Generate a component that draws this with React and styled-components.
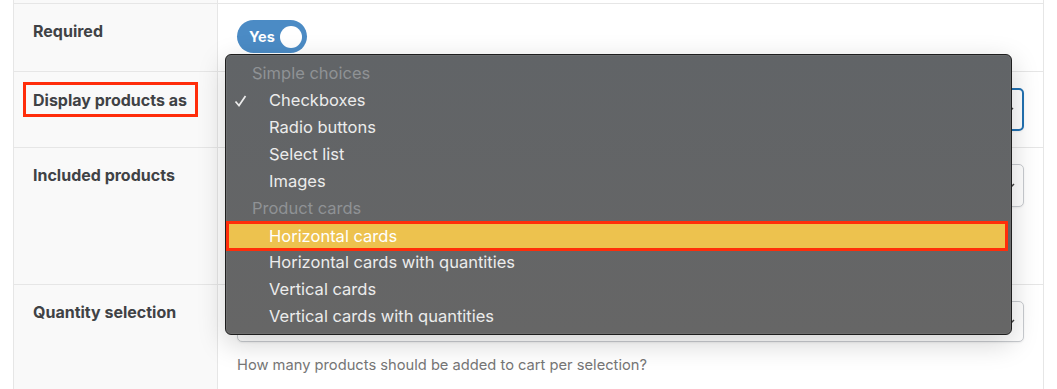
import React from "react";
import styled, { createGlobalStyle } from "styled-components";

const Global = createGlobalStyle`
  html, body { margin: 0; padding: 0; background: #fff; }
  body { font-family: Inter, "Liberation Sans", Arial, sans-serif; overflow: hidden; }
  * { box-sizing: border-box; }
`;

const Page = styled.div`
  position: relative;
  width: 1057px;
  height: 389px;
  overflow: hidden;
  background: #fff;
  padding-left: 13px;
  padding-right: 13px;
`;

const Table = styled.div`
  border-left: 1px solid #e6e6e6;
  border-right: 1px solid #e6e6e6;
  display: flex;
  flex-direction: column;
  width: 1031px;
  height: 389px;
`;

const Row = styled.div`
  display: grid;
  grid-template-columns: 204px 1fr;
  border-top: ${(p) => (p.$first ? "none" : "1px solid #e6e6e6")};
  min-height: ${(p) => p.$h}px;
  flex: ${(p) => (p.$grow ? 1 : "none")};
`;

const LabelCell = styled.div`
  background: #f9f9f9;
  border-right: 1px solid #e6e6e6;
  padding: ${(p) => (p.$empty ? "0" : "17px 0 0 19px")};
  font-size: 16px;
  font-weight: 700;
  color: #404245;
  line-height: 20px;
`;

const ValueCell = styled.div`
  padding: ${(p) => (p.$empty ? "0" : "16px 19px 0 19px")};
  display: flex;
  flex-direction: column;
  align-items: flex-start;
`;

const Outlined = styled.span`
  display: inline-block;
  border: 3px solid #ff2d0a;
  margin: -7px 0 0 -10px;
  padding: 5px 8px 4px 7px;
`;

const Toggle = styled.div`
  width: 70px;
  height: 33px;
  border-radius: 17px;
  background: #4b8bc5;
  display: flex;
  align-items: center;
  justify-content: space-between;
  padding: 0 5px 0 12px;
  color: #fff;
  font-size: 14.5px;
  font-weight: 700;
`;

const Knob = styled.span`
  width: 22px;
  height: 22px;
  border-radius: 50%;
  background: #fff;
`;

const Select = styled.div`
  align-self: stretch;
  height: ${(p) => p.$h || 43}px;
  border: ${(p) => (p.$focus ? "2px solid #2271b1" : "1px solid #c9ccd0")};
  border-radius: 5px;
  background: #fff;
  position: relative;
  box-shadow: 0 1px 2px rgba(0, 0, 0, 0.06);
`;

const Arrow = styled.svg`
  position: absolute;
  right: 8px;
  top: 50%;
  margin-top: -3px;
`;

const Help = styled.div`
  margin-top: 14px;
  font-size: 14.7px;
  color: #767676;
`;

const Menu = styled.div`
  position: absolute;
  left: 225px;
  top: 54px;
  width: 787px;
  height: 281px;
  border: 1px solid #1e1e1e;
  border-radius: 6px;
  background: linear-gradient(#616467, #666666);
  box-shadow: 0 8px 28px rgba(0, 0, 0, 0.18), inset 0 0 0 1px rgba(255,255,255,0.06);
  padding: 5px 0 4px 0;
  font-size: 16.5px;
  display: flex;
  flex-direction: column;
`;

const GroupHead = styled.div`
  height: 27px;
  line-height: 27px;
  padding-left: 26px;
  color: #8f9295;
`;

const Item = styled.div`
  height: 27px;
  line-height: 27px;
  padding-left: 43px;
  color: #ececec;
  position: relative;
`;

const HotItem = styled.div`
  height: 30px;
  line-height: 24px;
  margin: -1px 3px -2px 0;
  border: 3px solid #ff2d0a;
  background: #edc24e;
  padding-left: 40px;
  color: #fff;
`;

const Check = styled.svg`
  position: absolute;
  left: 8px;
  top: 8px;
`;

const ArrowIcon = () => (
  <Arrow width="8" height="6" viewBox="0 0 8 6">
    <path d="M1 1l3 3 3-3" fill="none" stroke="#444" strokeWidth="1.5" />
  </Arrow>
);

export default function App() {
  return (
    <>
      <Global />
      <Page>
        <Table>
          <Row $first $h={3}>
            <LabelCell $empty />
            <ValueCell $empty />
          </Row>
          <Row $h={68}>
            <LabelCell>Required</LabelCell>
            <ValueCell>
              <Toggle>
                Yes
                <Knob />
              </Toggle>
            </ValueCell>
          </Row>
          <Row $h={76}>
            <LabelCell>
              <Outlined>Display products as</Outlined>
            </LabelCell>
            <ValueCell>
              <Select $focus>
                <ArrowIcon />
              </Select>
            </ValueCell>
          </Row>
          <Row $h={137}>
            <LabelCell>Included products</LabelCell>
            <ValueCell>
              <Select $h={43}>
                <ArrowIcon />
              </Select>
            </ValueCell>
          </Row>
          <Row $grow>
            <LabelCell>Quantity selection</LabelCell>
            <ValueCell>
              <Select $h={41}>
                <ArrowIcon />
              </Select>
              <Help>How many products should be added to cart per selection?</Help>
            </ValueCell>
          </Row>
        </Table>
        <Menu>
          <GroupHead>Simple choices</GroupHead>
          <Item>
            <Check width="13" height="12" viewBox="0 0 13 12">
              <path d="M1.5 6.5l3.5 4L11.5 1" fill="none" stroke="#ececec" strokeWidth="1.7" />
            </Check>
            Checkboxes
          </Item>
          <Item>Radio buttons</Item>
          <Item>Select list</Item>
          <Item>Images</Item>
          <GroupHead>Product cards</GroupHead>
          <HotItem>Horizontal cards</HotItem>
          <Item>Horizontal cards with quantities</Item>
          <Item>Vertical cards</Item>
          <Item>Vertical cards with quantities</Item>
        </Menu>
      </Page>
    </>
  );
}
